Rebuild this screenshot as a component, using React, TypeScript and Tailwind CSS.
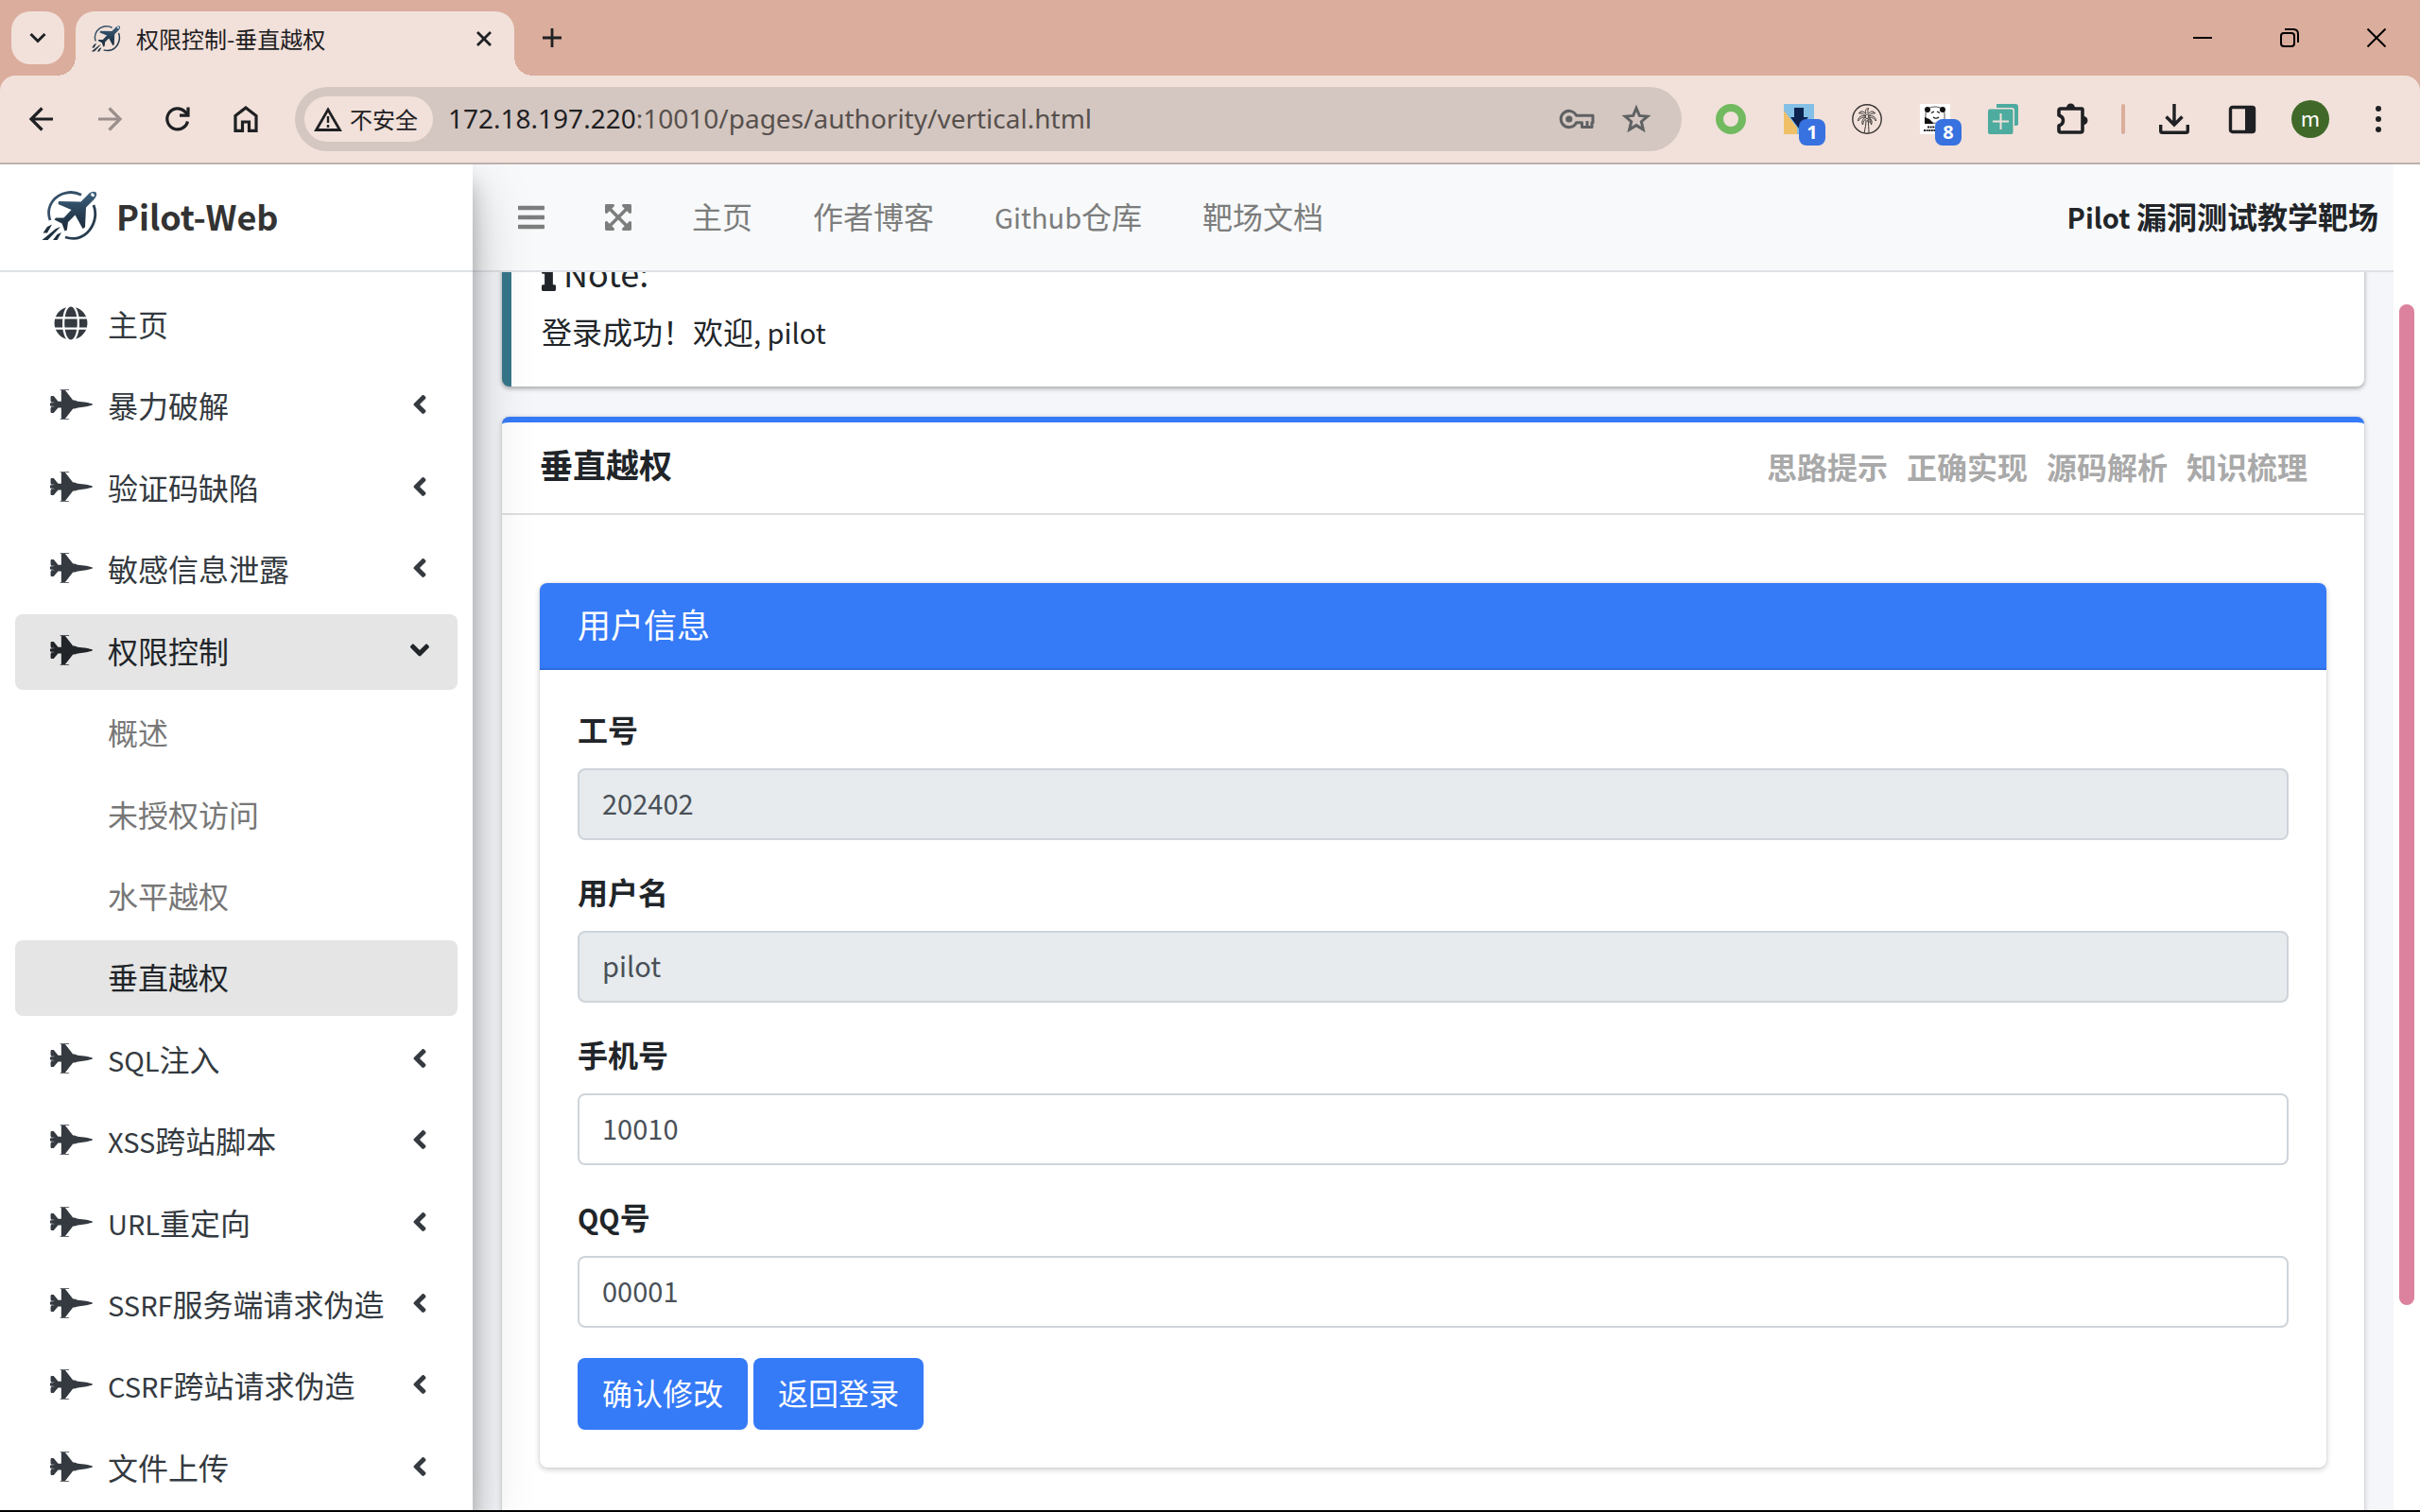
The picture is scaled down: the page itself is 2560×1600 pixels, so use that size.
import type { ReactNode } from "react";
import {
  FaAngleDown,
  FaAngleLeft,
  FaBars,
  FaExpandArrowsAlt,
  FaFighterJet,
  FaGlobe,
  FaInfo,
} from "react-icons/fa";

/** Sets Latin runs slightly smaller than the Chinese characters beside them. */
function Mixed({ text, latin }: { text: string; latin: string }) {
  return (
    <>
      {text.split(/([\x20-\x7e]+)/).map((part, i) =>
        i % 2 === 1 ? (
          <span key={i} className={latin}>
            {part}
          </span>
        ) : (
          part
        ),
      )}
    </>
  );
}

function Logo({ className }: { className: string }) {
  return (
    <svg viewBox="15 12 59 53" className={className} fill="none" aria-hidden="true">
      <defs>
        <linearGradient id="steel" x1="0" y1="0" x2="0" y2="1">
          <stop offset="0" stopColor="#3d617f" />
          <stop offset="0.6" stopColor="#263d51" />
          <stop offset="1" stopColor="#1d2b39" />
        </linearGradient>
      </defs>
      <path d="M57 16.200C47 11 34 13.500 27 22.500C22.500 28.500 21.500 36 24 43" stroke="#345068" strokeWidth="2.800" />
      <path d="M70 27C74 37 71 49 63 56.500C56.500 62.500 48 63.500 40 61" stroke="#263b4e" strokeWidth="2.800" />
      <path
        d="M72.500 13.500C70 12 66.500 13.300 64 16L56.500 23.500L33 23L32.500 26L46.500 32L38.500 40.500L30 40.500L28.500 42.500L36.500 46.500L39.500 54.500L41.800 53.500L43 45L50.500 37.500L58.500 52L61 50.500L62 29.500L70 21.500C72.800 18.500 74 15.500 72.500 13.500Z"
        fill="url(#steel)"
      />
      <ellipse cx="69" cy="16.200" rx="2.200" ry="1.600" fill="#fff" transform="rotate(45 69 16.200)" />
      <path d="M26 47.500L21 50L16.500 56.500H21ZM35 50L30 52L15.500 64H21.500ZM36 56L31.500 58L27 64H31.500Z" fill="#1f303f" />
    </svg>
  );
}

function TabStrip() {
  return (
    <div className="flex h-20 items-end bg-[#dbad9c] text-[#1f2023]">
      <button
        aria-label="搜索标签页"
        className="mb-3 ml-3 flex size-14 items-center justify-center rounded-[20px] bg-[#f1e1da]"
      >
        <svg viewBox="0 0 18 12" className="h-3 w-[18px]" fill="none" stroke="currentColor" strokeWidth="3">
          <path d="M1.500 2L9 9.500L16.500 2" />
        </svg>
      </button>
      <div className="relative ml-3 flex h-[68px] w-[464px] items-center rounded-t-[20px] bg-[#f1e1da] pb-2.5 pl-4 pr-6">
        <span className="absolute -left-5 bottom-0 size-5 bg-[radial-gradient(circle_at_0_0,transparent_20px,#f1e1da_20px)]" />
        <span className="absolute -right-5 bottom-0 size-5 bg-[radial-gradient(circle_at_100%_0,transparent_20px,#f1e1da_20px)]" />
        <Logo className="h-7 w-8" />
        <span className="ml-4 text-2xl">权限控制-垂直越权</span>
        <button aria-label="关闭标签页" className="ml-auto">
          <svg viewBox="0 0 16 16" className="size-4" fill="none" stroke="currentColor" strokeWidth="2.800">
            <path d="M1 1L15 15M15 1L1 15" />
          </svg>
        </button>
      </div>
      <button aria-label="新标签页" className="mb-[30px] ml-[30px]">
        <svg viewBox="0 0 20 20" className="size-5" fill="none" stroke="currentColor" strokeWidth="2.800">
          <path d="M10 0V20M0 10H20" />
        </svg>
      </button>
      <div className="mb-[30px] ml-auto mr-9 flex items-center gap-[72px] text-black">
        <button aria-label="最小化">
          <svg viewBox="0 0 20 20" className="size-5" fill="none" stroke="currentColor" strokeWidth="2">
            <path d="M0 10H20" />
          </svg>
        </button>
        <button aria-label="还原">
          <svg viewBox="0 0 20 20" className="size-5" fill="none" stroke="currentColor" strokeWidth="2">
            <rect x="1" y="5" width="14" height="14" rx="3" />
            <path d="M5 1H14C17 1 19 3 19 6V15" />
          </svg>
        </button>
        <button aria-label="关闭">
          <svg viewBox="0 0 20 20" className="size-5" fill="none" stroke="currentColor" strokeWidth="2">
            <path d="M0.500 0.500L19.500 19.500M19.500 0.500L0.500 19.500" />
          </svg>
        </button>
      </div>
    </div>
  );
}

function Badge({ children }: { children: string }) {
  return (
    <span className="absolute left-4 top-4 flex size-7 items-center justify-center rounded-lg bg-[#3871e0] font-['Open_Sans',sans-serif] text-xl font-bold leading-none text-white">
      {children}
    </span>
  );
}

function Extensions() {
  return (
    <div className="flex items-center gap-10 text-[#1f2023]">
      <button aria-label="扩展：绿环" className="size-8 rounded-full border-8 border-[#72ba60]" />
      <button aria-label="扩展：下载" className="relative">
        <svg viewBox="0 0 32 32" className="size-8">
          <rect width="32" height="32" fill="#84bfe6" />
          <path d="M0 7L14 25V32H0Z" fill="#f0c068" />
          <path d="M11 4H21V14H26L16 26L7 14H11Z" fill="#0c2350" />
        </svg>
        <Badge>1</Badge>
      </button>
      <button aria-label="扩展：棕榈树">
        <svg viewBox="0 0 32 32" className="size-8" fill="none" stroke="#3a3634" strokeWidth="1">
          <circle cx="16" cy="16" r="15.200" strokeWidth="1.400" />
          <path d="M15 17C15 21 14 26 13 31M17 17C17.500 21 18 26 18 31" />
          <path d="M15.500 12C13 7 9 7 7.500 10C10 9.500 13 10.500 15 13C10 11.500 6.500 14 6.500 18C9 14.500 12 14 15 14C11 15.500 10 19 11.500 22C12 18 14 16 16 15" />
          <path d="M16.500 12C19 7 23 7 24.500 10C22 9.500 19 10.500 17 13C22 11.500 25.500 14 25.500 18C23 14.500 20 14 17 14C21 15.500 22 19 20.500 22C20 18 18 16 16 15" />
          <path d="M15 10C13.500 7.500 14.500 5 17.500 4.500C16.500 6.500 17 8.500 17 10" />
          <circle cx="18.500" cy="17.500" r="1.700" />
        </svg>
      </button>
      <button aria-label="扩展：熊猫" className="relative">
        <svg viewBox="0 0 32 32" className="size-8">
          <rect width="32" height="32" fill="#fff" />
          <path d="M6 11C6 6 10 3 16 3C22 3 26 6 26 11V18C25 21 7 21 6 18Z" fill="#fff" stroke="#555" strokeWidth="1" />
          <circle cx="8" cy="6" r="3" fill="#111" />
          <circle cx="24" cy="6" r="3" fill="#111" />
          <path d="M5 14L10 16L14 20V21H5Z" fill="#111" />
          <path d="M12 9.500L15 8M18 8L21 9.500M14 14Q17 16.500 20 14" stroke="#111" strokeWidth="1.200" fill="none" />
          <path d="M8 24.500H20M4 28H24" stroke="#222" strokeWidth="2" strokeDasharray="2 0.600" />
        </svg>
        <Badge>8</Badge>
      </button>
      <button aria-label="扩展：翻译">
        <svg viewBox="0 0 32 32" className="size-8">
          <path d="M9 0H29Q32 0 32 3V21Q32 23 29 23H28V7Q28 4 25 4H9Z" fill="#4eab9f" />
          <rect y="5.500" width="26.500" height="26.500" rx="2" fill="#4eab9f" />
          <path d="M13.500 10V27M5 18.500H22" stroke="#f1e1da" strokeWidth="2" />
        </svg>
      </button>
      <button aria-label="扩展程序">
        <svg viewBox="0 0 34 34" className="size-[34px]">
          <path
            d="M5 6H27Q28 6 28 7V29Q28 31 26 31H5Q3 31 3 29V24C9 22 9 15 3 13V8Q3 6 5 6Z"
            fill="none"
            stroke="currentColor"
            strokeWidth="3.600"
            strokeLinejoin="round"
          />
          <path d="M11 5A4.500 4.500 0 0 1 20 5ZM29 14A4.500 4.500 0 0 1 29 23Z" fill="currentColor" />
        </svg>
      </button>
    </div>
  );
}

function ToolbarCell({ label, children }: { label: string; children: ReactNode }) {
  return (
    <button aria-label={label} className="flex w-[72px] justify-center">
      {children}
    </button>
  );
}

function Toolbar() {
  return (
    <div className="bg-[#dbad9c]">
      <div className="flex h-[94px] items-center rounded-t-2xl border-b-2 border-[#bdb1ad] bg-[#f1e1da] pr-2 text-[#1f2023]">
        <nav aria-label="浏览" className="ml-2 flex items-center">
          <ToolbarCell label="后退">
            <svg viewBox="0 0 32 32" className="size-8" fill="none" stroke="currentColor" strokeWidth="3.200">
              <path d="M28 16H5.500M16.500 4.500L5 16L16.500 27.500" />
            </svg>
          </ToolbarCell>
          <ToolbarCell label="前进">
            <svg viewBox="0 0 32 32" className="size-8" fill="none" stroke="#9a8f8c" strokeWidth="3.200">
              <path d="M4 16H26.500M15.500 4.500L27 16L15.500 27.500" />
            </svg>
          </ToolbarCell>
          <ToolbarCell label="重新加载">
            <svg viewBox="0 0 32 32" className="size-8" fill="none" stroke="currentColor" strokeWidth="3.200">
              <path d="M26.500 18.500A11 11 0 1 1 23.500 8L27 11.500" />
              <path d="M27 3.500V12.200H18" />
            </svg>
          </ToolbarCell>
          <ToolbarCell label="主页">
            <svg viewBox="0 0 32 32" className="size-8" fill="none" stroke="currentColor" strokeWidth="3.200">
              <path d="M5 12.500L16 4L27 12.500V28.400H19.500V19H12.500V28.400H5Z" />
            </svg>
          </ToolbarCell>
        </nav>
        <div className="ml-4 flex h-[68px] flex-1 items-center rounded-full bg-[#d4c7c1] pl-2.5 pr-8">
          <button className="flex h-12 shrink-0 items-center gap-2 rounded-full bg-[#f1e1da] pl-2.5 pr-4 text-2xl">
            <svg viewBox="0 0 30 26" className="h-[26px] w-[30px]" fill="none" stroke="currentColor" strokeWidth="2.800">
              <path d="M15 3L27.500 24.500H2.500Z" />
              <path d="M15 10V17M15 19V22" strokeWidth="2.400" />
            </svg>
            不安全
          </button>
          <a
            href="#top"
            className="ml-4 flex-1 whitespace-nowrap pb-0.5 font-['Noto_Sans',sans-serif] text-[28px] leading-10 text-[#57504d]"
          >
            <span className="text-[#1f2023]">172.18.197.220</span>:10010/pages/authority/vertical.html
          </a>
          <button aria-label="管理密码" className="text-[#5f6163]">
            <svg viewBox="0 0 38 24" className="h-6 w-[38px]" fill="none" stroke="currentColor" strokeWidth="3">
              <path d="M18.500 8.200A8.600 8.600 0 1 0 18.500 15.800H24.500V20.500H35V15.800H36V8.200Z" strokeLinejoin="round" />
              <circle cx="10.800" cy="12" r="3.600" fill="currentColor" stroke="none" />
              <path d="M30 14V19" />
            </svg>
          </button>
          <button aria-label="添加书签" className="ml-7 text-[#5f6163]">
            <svg viewBox="0 0 32 32" className="size-8" fill="none" stroke="currentColor" strokeWidth="3">
              <path d="M16 4.500L19.300 12.400L27.800 13.100L21.300 18.700L23.300 27L16 22.600L8.700 27L10.700 18.700L4.200 13.100L12.700 12.400Z" />
            </svg>
          </button>
        </div>
        <div className="ml-9 flex items-center">
          <Extensions />
          <span className="ml-[35px] h-8 w-1 rounded-full bg-[#dbad9c]" />
          <div className="ml-4 flex items-center">
            <ToolbarCell label="下载内容">
              <svg viewBox="0 0 32 32" className="size-8" fill="none" stroke="currentColor" strokeWidth="3.400">
                <path d="M16 0V21M7.500 13.500L16 22L24.500 13.500M1.700 22V28.500Q1.700 30.300 3.500 30.300H28.500Q30.300 30.300 30.300 28.500V22" />
              </svg>
            </ToolbarCell>
            <ToolbarCell label="侧边栏">
              <svg viewBox="0 0 32 32" className="size-8">
                <rect x="3.500" y="3.500" width="25" height="26" rx="2" fill="none" stroke="currentColor" strokeWidth="3.400" />
                <rect x="19" y="3" width="10" height="27" fill="currentColor" />
              </svg>
            </ToolbarCell>
            <ToolbarCell label="个人资料">
              <span className="flex size-10 items-center justify-center rounded-full bg-[#3f6829] pb-1 text-[22px] leading-none text-white">
                m
              </span>
            </ToolbarCell>
            <ToolbarCell label="更多">
              <svg viewBox="0 0 32 32" className="size-8" fill="currentColor">
                <circle cx="16" cy="5" r="3" />
                <circle cx="16" cy="16" r="3" />
                <circle cx="16" cy="27" r="3" />
              </svg>
            </ToolbarCell>
          </div>
        </div>
      </div>
    </div>
  );
}

type Item = { label: string; kind: "home" | "group" | "child"; active?: boolean };

const items: Item[] = [
  { label: "主页", kind: "home" },
  { label: "暴力破解", kind: "group" },
  { label: "验证码缺陷", kind: "group" },
  { label: "敏感信息泄露", kind: "group" },
  { label: "权限控制", kind: "group", active: true },
  { label: "概述", kind: "child" },
  { label: "未授权访问", kind: "child" },
  { label: "水平越权", kind: "child" },
  { label: "垂直越权", kind: "child", active: true },
  { label: "SQL注入", kind: "group" },
  { label: "XSS跨站脚本", kind: "group" },
  { label: "URL重定向", kind: "group" },
  { label: "SSRF服务端请求伪造", kind: "group" },
  { label: "CSRF跨站请求伪造", kind: "group" },
  { label: "文件上传", kind: "group" },
];

function NavRow({ item }: { item: Item }) {
  const tone = item.active
    ? "bg-[#e5e5e5] text-[#212529]"
    : item.kind === "child"
      ? "text-[#777777]"
      : "text-[#343a40]";
  return (
    <li>
      <a href="#top" className={`flex h-20 items-center rounded-lg px-8 pb-1 ${tone}`}>
        <span className="flex w-[54px] shrink-0 justify-center">
          {item.kind === "home" && <FaGlobe className="size-9" />}
          {item.kind === "group" && <FaFighterJet className="h-9 w-[45px]" />}
        </span>
        <span className="ml-3 whitespace-nowrap">
          <Mixed text={item.label} latin="text-[29px]" />
        </span>
        {item.kind === "group" && (
          <span className="ml-auto flex w-4 justify-center">
            {item.active ? <FaAngleDown className="size-8 shrink-0" /> : <FaAngleLeft className="size-8 shrink-0" />}
          </span>
        )}
      </a>
    </li>
  );
}

function Sidebar() {
  return (
    <aside className="relative z-10 flex w-[500px] shrink-0 flex-col bg-white shadow-[0_28px_56px_rgba(0,0,0,0.25),0_20px_20px_rgba(0,0,0,0.22)]">
      <a href="#top" className="flex h-[114px] shrink-0 items-center border-b-2 border-[#dee2e6] pb-1 pl-11">
        <Logo className="h-[53px] w-[59px]" />
        <span className="ml-5 text-4xl font-bold text-[#333333]">Pilot-Web</span>
      </a>
      <nav aria-label="侧边导航" className="flex flex-1 flex-col px-4 pb-1 pt-4">
        <ul className="flex flex-1 flex-col justify-between">
          {items.map((item, i) => (
            <NavRow key={i} item={item} />
          ))}
        </ul>
      </nav>
    </aside>
  );
}

function NavLink({ children, label }: { children: ReactNode; label?: string }) {
  return (
    <a href="#top" aria-label={label} className={label ? "px-8" : "px-8 pb-1"}>
      {children}
    </a>
  );
}

function TopBar() {
  return (
    <header className="relative flex h-[114px] shrink-0 items-center border-b-2 border-[#dee2e6] bg-[#f8f9fa] px-4 text-[#7c7d7d]">
      <NavLink label="菜单">
        <FaBars className="h-8 w-7" />
      </NavLink>
      <NavLink label="全屏">
        <FaExpandArrowsAlt className="h-8 w-7" />
      </NavLink>
      <NavLink>主页</NavLink>
      <NavLink>作者博客</NavLink>
      <NavLink>
        <Mixed text="Github仓库" latin="text-[29px]" />
      </NavLink>
      <NavLink>靶场文档</NavLink>
      <strong className="ml-auto pb-1 font-bold text-[#212529]">
        <Mixed text="Pilot 漏洞测试教学靶场" latin="text-[29px]" />
      </strong>
    </header>
  );
}

const fields = [
  { id: "job", label: "工号", value: "202402", locked: true },
  { id: "user", label: "用户名", value: "pilot", locked: true },
  { id: "phone", label: "手机号", value: "10010", locked: false },
  { id: "qq", label: "QQ号", value: "00001", locked: false },
];

function UserForm() {
  return (
    <section className="rounded-lg bg-white shadow-[0_0_2px_rgba(0,0,0,0.125),0_2px_6px_rgba(0,0,0,0.2)]">
      <h3 className="flex h-[92px] items-center rounded-t-lg border-b-2 border-[#2f6cdc] bg-[#357af7] px-10 pb-1 text-[35px] text-white">
        用户信息
      </h3>
      <form className="p-10" onSubmit={(e) => e.preventDefault()}>
        {fields.map((f) => (
          <div key={f.id} className="mb-8">
            <label htmlFor={f.id} className="mb-4 block h-12 font-bold leading-[44px]">
              <Mixed text={f.label} latin="text-[29px]" />
            </label>
            <input
              id={f.id}
              defaultValue={f.value}
              disabled={f.locked}
              className="block h-[76px] w-full rounded-lg border-2 border-[#ced4da] bg-white px-6 pb-1 text-[29px] text-[#495057] disabled:bg-[#e7ebee]"
            />
          </div>
        ))}
        <div className="flex gap-1.5">
          <button className="h-[76px] rounded-lg bg-[#357af7] px-[26px] pb-1 text-white">确认修改</button>
          <button className="h-[76px] rounded-lg bg-[#357af7] px-[26px] pb-1 text-white">返回登录</button>
        </div>
      </form>
    </section>
  );
}

function Content() {
  return (
    <main className="flex-1 overflow-hidden bg-[#f4f6f9] px-[31px]">
      <div className="-mt-14">
        <section className="rounded-lg border-l-[10px] border-[#37778a] bg-white p-8 shadow-[0_2px_6px_rgba(0,0,0,0.12),0_2px_4px_rgba(0,0,0,0.24)]">
          <h2 className="mb-4 flex items-center gap-2 text-4xl leading-[48px]">
            <FaInfo className="h-10 w-[15px]" />
            Note:
          </h2>
          <p className="pb-1 leading-[44px]">
            <Mixed text="登录成功！欢迎, pilot" latin="text-[29px]" />
          </p>
        </section>
        <section className="mt-8 rounded-lg border-t-[6px] border-[#357af7] bg-white pb-24 shadow-[0_0_2px_rgba(0,0,0,0.125),0_2px_6px_rgba(0,0,0,0.2)]">
          <div className="flex h-[98px] items-center border-b-2 border-[#dddfe0] pl-10 pr-[60px]">
            <h2 className="pb-2 text-[35px] font-bold">垂直越权</h2>
            <div className="ml-auto flex gap-5 pb-1 font-bold text-[#a9a9a9]">
              <button>思路提示</button>
              <button>正确实现</button>
              <button>源码解析</button>
              <button>知识梳理</button>
            </div>
          </div>
          <div className="px-10 pt-[72px]">
            <UserForm />
          </div>
        </section>
      </div>
    </main>
  );
}

export default function App() {
  return (
    <div
      id="top"
      className="flex h-screen flex-col overflow-hidden border-b-2 border-black bg-white font-['Noto_Sans_CJK_SC',sans-serif] text-[32px] text-[#212529]"
    >
      <TabStrip />
      <Toolbar />
      <div className="flex min-h-0 flex-1 overflow-hidden">
        <Sidebar />
        <div className="flex min-w-0 flex-1 flex-col">
          <TopBar />
          <Content />
        </div>
        <div className="flex w-7 flex-col bg-white px-1.5">
          <div className="grow-[148]" />
          <div className="grow-[1059] rounded-full bg-[#dc829f]" />
          <div className="grow-[217]" />
        </div>
      </div>
    </div>
  );
}
